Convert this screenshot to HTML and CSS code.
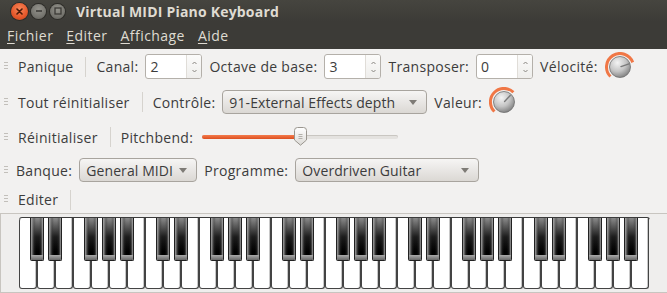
FILE: index.html
```html
<!DOCTYPE html>
<html lang="fr">
<head>
    <meta charset="UTF-8">
    <meta name="viewport" content="width=device-width, initial-scale=1.0">
    <title>Virtual MIDI Piano Keyboard</title>
    <link rel="stylesheet" href="styles.css">
</head>
<body>
    <div class="window">
        <header class="titlebar">
            <div class="wbuttons">
                <span class="wbtn close">
                    <svg width="7" height="7" viewBox="0 0 7 7"><path d="M1 1L6 6M6 1L1 6" stroke="#4a1a08" stroke-width="1.6" stroke-linecap="round"/></svg>
                </span>
                <span class="wbtn mini">
                    <svg width="8" height="8" viewBox="0 0 8 8"><path d="M1 4H7" stroke="#3c3b37" stroke-width="1.6"/></svg>
                </span>
                <span class="wbtn maxi">
                    <svg width="8" height="8" viewBox="0 0 8 8"><rect x="1" y="1" width="6" height="6" fill="none" stroke="#3c3b37" stroke-width="1.3"/></svg>
                </span>
            </div>
            <h1>Virtual MIDI Piano Keyboard</h1>
        </header>

        <nav class="menubar">
            <span><u>F</u>ichier</span>
            <span><u>E</u>diter</span>
            <span><u>A</u>ffichage</span>
            <span><u>A</u>ide</span>
        </nav>

        <!-- barres d'outils -->
        <div class="toolbar row1">
            <span class="grip"></span>
            <span class="tbtn">Panique</span>
            <span class="sep"></span>
            <span class="label">Canal:</span>
            <div class="spin">
                <span class="val">2</span>
                <span class="arrows">
                    <svg width="7" height="16" viewBox="0 0 7 16"><path d="M1.5 5L3.5 3L5.5 5" fill="none" stroke="#8a8782" stroke-width="1"/><path d="M1.5 11L3.5 13L5.5 11" fill="none" stroke="#8a8782" stroke-width="1"/></svg>
                </span>
            </div>
            <span class="label">Octave de base:</span>
            <div class="spin">
                <span class="val">3</span>
                <span class="arrows">
                    <svg width="7" height="16" viewBox="0 0 7 16"><path d="M1.5 5L3.5 3L5.5 5" fill="none" stroke="#8a8782" stroke-width="1"/><path d="M1.5 11L3.5 13L5.5 11" fill="none" stroke="#8a8782" stroke-width="1"/></svg>
                </span>
            </div>
            <span class="label">Transposer:</span>
            <div class="spin">
                <span class="val">0</span>
                <span class="arrows">
                    <svg width="7" height="16" viewBox="0 0 7 16"><path d="M1.5 5L3.5 3L5.5 5" fill="none" stroke="#8a8782" stroke-width="1"/><path d="M1.5 11L3.5 13L5.5 11" fill="none" stroke="#8a8782" stroke-width="1"/></svg>
                </span>
            </div>
            <span class="label">Vélocité:</span>
            <svg class="knob" width="30" height="30" viewBox="0 0 30 30">
                <defs>
                    <radialGradient id="kg1" cx="0.38" cy="0.3" r="0.75">
                        <stop offset="0" stop-color="#f4f4f4"/>
                        <stop offset="0.55" stop-color="#c4c4c4"/>
                        <stop offset="1" stop-color="#7c7c7c"/>
                    </radialGradient>
                </defs>
                <path d="M5.45 24.55A13.5 13.5 0 1 1 27.69 10.38" fill="none" stroke="#f07746" stroke-width="3"/>
                <circle cx="15" cy="15" r="10.5" fill="url(#kg1)" stroke="#6f6f6f" stroke-width="0.8"/>
                <path d="M16 14.6L24 11.8" stroke="#7a7a7a" stroke-width="1.4" stroke-linecap="round"/>
            </svg>
        </div>

        <div class="toolbar row2">
            <span class="grip"></span>
            <span class="tbtn">Tout réinitialiser</span>
            <span class="sep"></span>
            <span class="label">Contrôle:</span>
            <div class="combo ctrl">
                <span>91-External Effects depth</span>
                <span class="arrow"></span>
            </div>
            <span class="label">Valeur:</span>
            <svg class="knob" width="30" height="30" viewBox="0 0 30 30">
                <defs>
                    <radialGradient id="kg2" cx="0.38" cy="0.3" r="0.75">
                        <stop offset="0" stop-color="#f4f4f4"/>
                        <stop offset="0.55" stop-color="#c4c4c4"/>
                        <stop offset="1" stop-color="#7c7c7c"/>
                    </radialGradient>
                </defs>
                <path d="M5.45 24.55A13.5 13.5 0 0 1 24.38 5.29" fill="none" stroke="#f07746" stroke-width="3"/>
                <circle cx="15" cy="15" r="10.5" fill="url(#kg2)" stroke="#6f6f6f" stroke-width="0.8"/>
                <path d="M15.6 14.4L21.2 8.6" stroke="#7a7a7a" stroke-width="1.4" stroke-linecap="round"/>
            </svg>
        </div>

        <div class="toolbar row3">
            <span class="grip"></span>
            <span class="tbtn">Réinitialiser</span>
            <span class="sep"></span>
            <span class="label">Pitchbend:</span>
            <div class="slider">
                <div class="track"><div class="fill"></div></div>
                <svg class="handle" width="13" height="19" viewBox="0 0 13 19">
                    <defs>
                        <linearGradient id="hg" x1="0" y1="0" x2="0" y2="1">
                            <stop offset="0" stop-color="#ffffff"/>
                            <stop offset="1" stop-color="#dcdad6"/>
                        </linearGradient>
                    </defs>
                    <path d="M0.5 3.5Q0.5 0.5 3.5 0.5H9.5Q12.5 0.5 12.5 3.5V13L6.5 18.2L0.5 13Z" fill="url(#hg)" stroke="#9a968f"/>
                    <path d="M4.5 7.5H8.5M4.5 9.5H8.5M4.5 11.5H8.5" stroke="#b3b0aa" stroke-width="1"/>
                </svg>
            </div>
        </div>

        <div class="toolbar row4">
            <span class="grip"></span>
            <span class="label">Banque:</span>
            <div class="combo bank">
                <span>General MIDI</span>
                <span class="arrow"></span>
            </div>
            <span class="label">Programme:</span>
            <div class="combo prog">
                <span>Overdriven Guitar</span>
                <span class="arrow"></span>
            </div>
        </div>

        <div class="toolbar row5">
            <span class="grip"></span>
            <span class="tbtn">Editer</span>
            <span class="sep"></span>
        </div>

        <!-- clavier -->
        <div class="keyframe">
            <div class="piano">
                <div class="octave">
                    <div class="white"></div><div class="white"></div><div class="white"></div><div class="white"></div><div class="white"></div><div class="white"></div><div class="white"></div>
                    <div class="black cs"></div><div class="black ds"></div><div class="black fs"></div><div class="black gs"></div><div class="black as"></div>
                </div>
                <div class="octave">
                    <div class="white"></div><div class="white"></div><div class="white"></div><div class="white"></div><div class="white"></div><div class="white"></div><div class="white"></div>
                    <div class="black cs"></div><div class="black ds"></div><div class="black fs"></div><div class="black gs"></div><div class="black as"></div>
                </div>
                <div class="octave">
                    <div class="white"></div><div class="white"></div><div class="white"></div><div class="white"></div><div class="white"></div><div class="white"></div><div class="white"></div>
                    <div class="black cs"></div><div class="black ds"></div><div class="black fs"></div><div class="black gs"></div><div class="black as"></div>
                </div>
                <div class="octave">
                    <div class="white"></div><div class="white"></div><div class="white"></div><div class="white"></div><div class="white"></div><div class="white"></div><div class="white"></div>
                    <div class="black cs"></div><div class="black ds"></div><div class="black fs"></div><div class="black gs"></div><div class="black as"></div>
                </div>
                <div class="octave">
                    <div class="white"></div><div class="white"></div><div class="white"></div><div class="white"></div><div class="white"></div><div class="white"></div><div class="white"></div>
                    <div class="black cs"></div><div class="black ds"></div><div class="black fs"></div><div class="black gs"></div><div class="black as"></div>
                </div>
            </div>
        </div>
    </div>
</body>
</html>
```

FILE: styles.css
```css
* {
    box-sizing: border-box;
}

body {
    margin: 0;
    padding: 0;
    font-family: "Open Sans", "DejaVu Sans", sans-serif;
    font-size: 14px;
    letter-spacing: 0.3px;
    color: #3c3c3c;
    background-color: #f2f1f0;
}

.window {
    width: 667px;
    height: 293px;
    overflow: hidden;
    background-color: #f2f1f0;
}

/* barre de titre */
.titlebar {
    height: 22px;
    display: flex;
    align-items: center;
    background: linear-gradient(#46453f, #3c3b37);
}

.wbuttons {
    display: flex;
    align-items: center;
    margin-left: 11px;
    width: 65px;
}

.wbtn {
    display: flex;
    align-items: center;
    justify-content: center;
    border-radius: 50%;
}

.wbtn.close {
    width: 17px;
    height: 17px;
    background: radial-gradient(circle at 50% 35%, #f8875a, #e5572a 60%, #b9401a);
    box-shadow: 0 0 0 1px #2d2c28;
}

.wbtn.mini,
.wbtn.maxi {
    width: 15px;
    height: 15px;
    background: radial-gradient(circle at 50% 35%, #94938c, #76756f 60%, #5c5b56);
    box-shadow: 0 0 0 1px #2d2c28;
}

.wbtn.mini {
    margin-left: 3px;
}

.wbtn.maxi {
    margin-left: 4px;
}

.titlebar h1 {
    margin: 0;
    font-size: 14px;
    font-weight: bold;
    letter-spacing: 0.2px;
    color: #dfdbd2;
}

/* menu */
.menubar {
    height: 27px;
    display: flex;
    align-items: center;
    padding-left: 7px;
    background-color: #3c3b37;
    color: #dfdbd2;
    letter-spacing: 0.45px;
    gap: 13px;
}

.menubar u {
    text-underline-offset: 2px;
}

/* barres d'outils */
.toolbar {
    display: flex;
    align-items: center;
    white-space: nowrap;
}

.row1 { height: 35px; }
.row2 { height: 36px; }
.row3 { height: 34px; }
.row4 { height: 32px; }
.row5 { height: 27px; }

.grip {
    width: 4px;
    height: 9px;
    margin: 0 10px 0 4px;
    background: repeating-linear-gradient(to bottom, #c2bfba 0, #c2bfba 1px, transparent 1px, transparent 3px);
}

.row4 .grip {
    margin-right: 8px;
}

.tbtn {
    margin-right: 12px;
}

.sep {
    width: 1px;
    height: 20px;
    background-color: #d6d3ce;
    margin-right: 10px;
}

.label {
    margin-right: 7px;
}

.spin {
    display: flex;
    width: 57px;
    height: 25px;
    margin-right: 7px;
    background-color: #fff;
    border: 1px solid #b4b0aa;
    border-radius: 3px;
}

.spin .val {
    flex: 1;
    padding-left: 4px;
    line-height: 23px;
}

.spin .arrows {
    width: 15px;
    display: flex;
    align-items: center;
    justify-content: center;
    border-left: 1px solid #e0ddd8;
    background: linear-gradient(#fbfbfa, #efeeec);
    border-radius: 0 2px 2px 0;
}

.knob {
    display: block;
}

.combo {
    display: flex;
    align-items: center;
    justify-content: space-between;
    height: 24px;
    padding: 0 9px 0 6px;
    margin-right: 7px;
    border: 1px solid #a8a49e;
    border-radius: 4px;
    letter-spacing: 0.1px;
    background: linear-gradient(#f6f5f4, #dbd8d4);
}

.combo .arrow {
    width: 0;
    height: 0;
    border-top: 5px solid #7e7b76;
    border-left: 4px solid transparent;
    border-right: 4px solid transparent;
}

.combo.ctrl { width: 205px; }
.combo.bank { width: 118px; }
.combo.prog { width: 184px; }

.slider {
    position: relative;
    width: 196px;
    height: 20px;
    margin-left: 2px;
    display: flex;
    align-items: center;
}

.slider .track {
    width: 100%;
    height: 4px;
    border-radius: 2px;
    background-color: #e4e2df;
    box-shadow: inset 0 1px 0 #c9c6c1;
}

.slider .fill {
    width: 96px;
    height: 4px;
    border-radius: 2px;
    background: linear-gradient(#f47b4c, #dd4f1f);
}

.slider .handle {
    position: absolute;
    left: 92px;
    top: 0;
}

/* clavier */
.keyframe {
    height: 80px;
    border-top: 1px solid #c8c5c0;
    border-bottom: 1px solid #c8c5c0;
    border-left: 1px solid #c8c5c0;
    background-color: #efeeed;
    padding: 3px 0 0 18px;
}

.piano {
    display: flex;
    width: 631px;
    height: 72px;
    border-top: 1px solid #3c3c3c;
    border-radius: 3px 3px 0 0;
}

.octave {
    position: relative;
    display: flex;
}

.white {
    width: 18px;
    height: 71px;
    background-color: #fff;
    border: 1px solid #444;
    border-top: none;
    border-radius: 0 0 3px 3px;
    box-shadow: inset -1px 0 0 #c8c8c8;
}

.octave:first-child .white:first-child {
    border-top-left-radius: 3px;
}

.black {
    position: absolute;
    top: 0;
    width: 14px;
    height: 43px;
    border: 1px solid #222;
    border-top: none;
    border-radius: 0 0 2px 2px;
    background:
        linear-gradient(to right, rgba(170, 170, 170, 0.95) 0, rgba(60, 60, 60, 0.4) 3px, transparent 5px, transparent 8px, rgba(60, 60, 60, 0.4) 10px, rgba(170, 170, 170, 0.95) 12px),
        linear-gradient(to bottom, #8a8a8a, #1c1c1c 45%, #000 80%);
}

.black::after {
    content: "";
    position: absolute;
    left: 0;
    right: 0;
    bottom: 0;
    height: 5px;
    border-radius: 0 0 2px 2px;
    background: linear-gradient(#a9a9a9, #6a6a6a);
}

.black.cs { left: 11px; }
.black.ds { left: 29px; }
.black.fs { left: 65px; }
.black.gs { left: 83px; }
.black.as { left: 101px; }
```
